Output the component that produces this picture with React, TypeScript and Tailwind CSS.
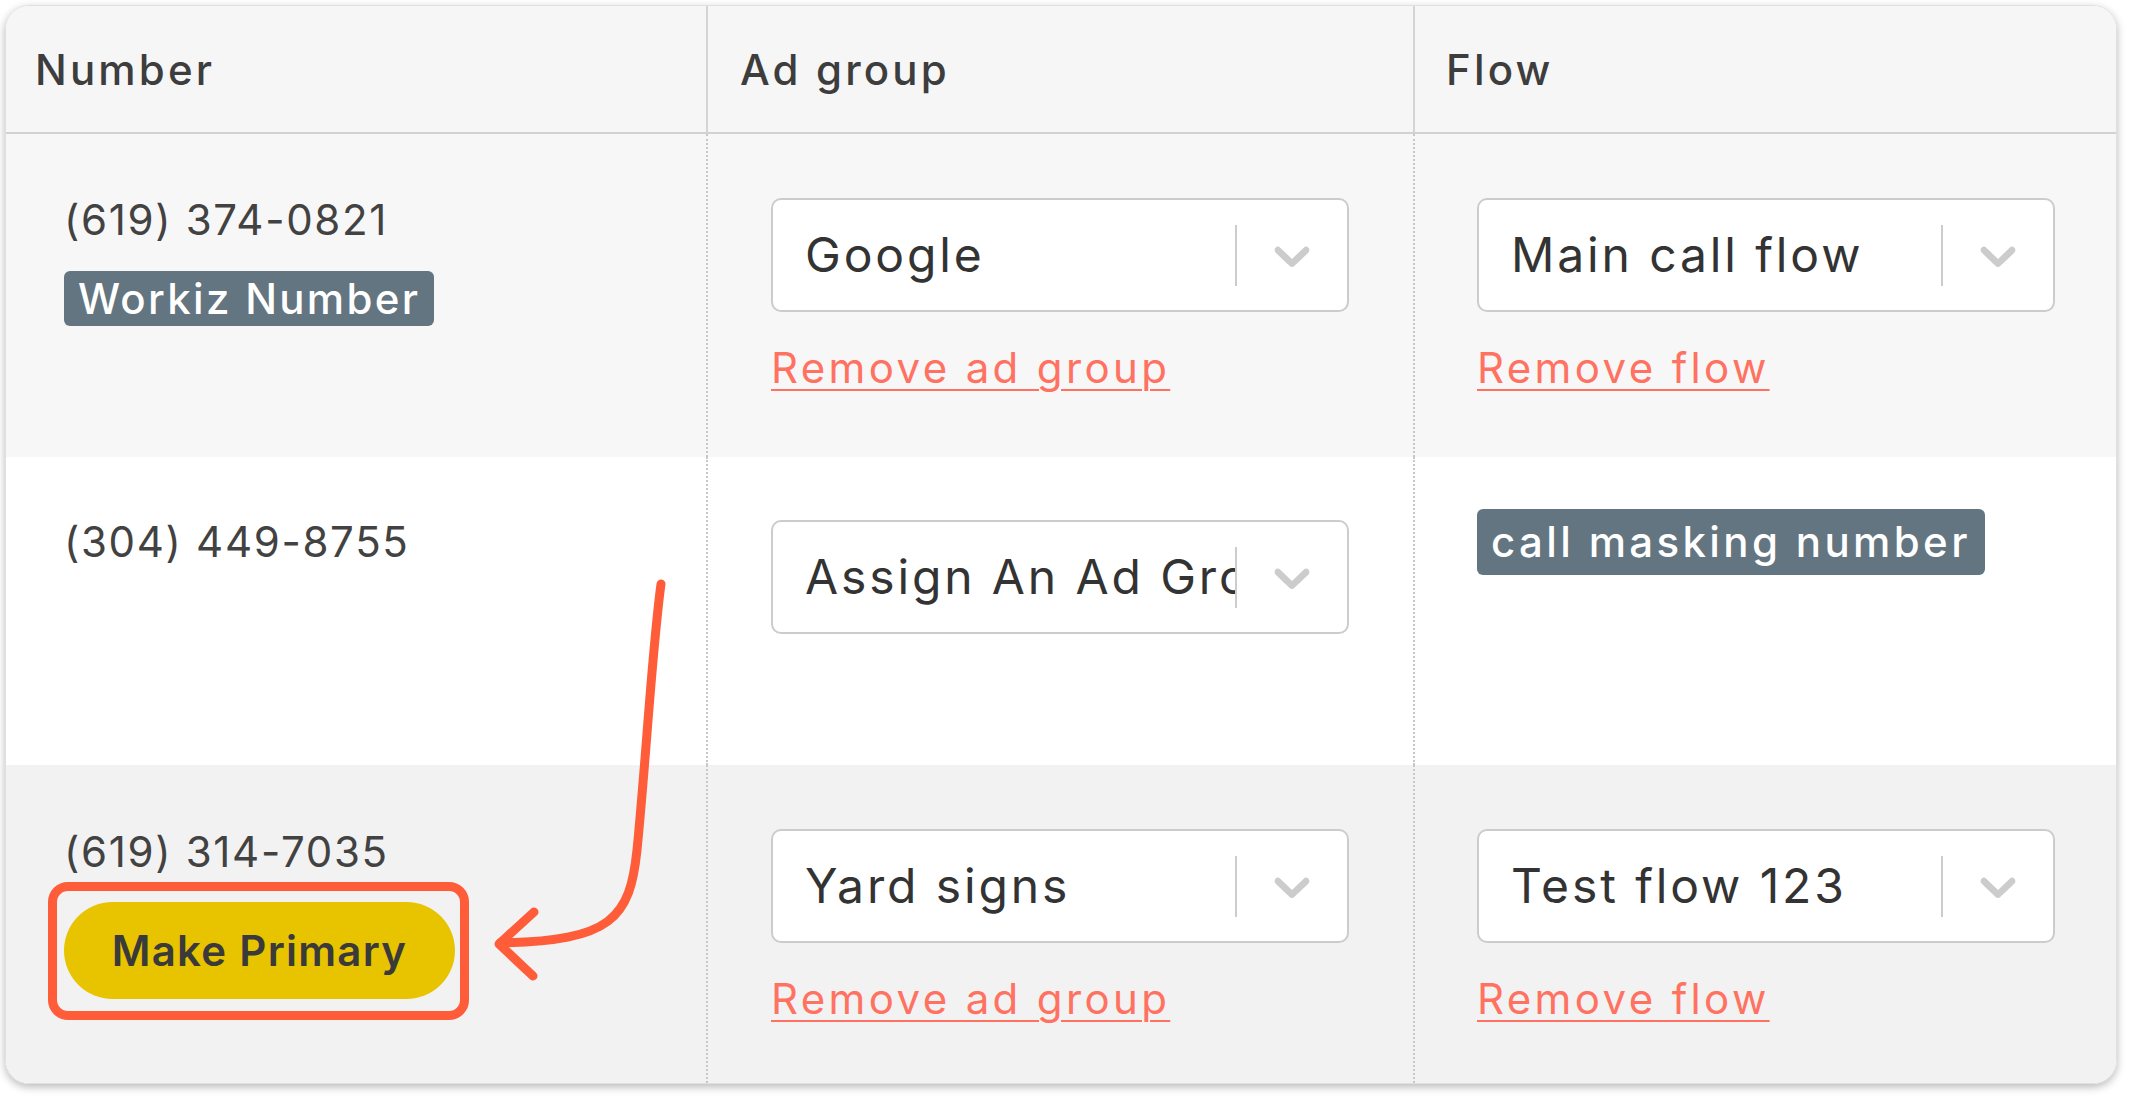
import React from "react"

function Chevron() {
  return (
    <svg viewBox="0 0 20 20" className="h-[60px] w-[60px] fill-[#cccccc]">
      <path d="M4.516 7.548c0.436-0.446 1.043-0.481 1.576 0L10 11.295l3.908-3.747c0.533-0.481 1.141-0.446 1.574 0 0.436 0.445 0.408 1.197 0 1.615-0.406 0.418-4.695 4.502-4.695 4.502C10.57 13.888 10.285 14 10 14s-0.57-0.112-0.789-0.335c0 0-4.287-4.084-4.695-4.502s-0.436-1.17 0-1.615z" />
    </svg>
  )
}

function Select({ value }: { value: string }) {
  return (
    <div className="flex h-[114px] w-[578px] items-center rounded-[10px] border-2 border-[#cccccc] bg-white">
      <div className="min-w-0 flex-1 overflow-hidden whitespace-nowrap pl-[32px] text-[48px] leading-[58px] tracking-[0.06em] text-[#333333]">
        {value}
      </div>
      <span className="h-[61px] w-[2px] shrink-0 bg-[#cccccc]" />
      <div className="flex w-[110px] shrink-0 items-center justify-center">
        <Chevron />
      </div>
    </div>
  )
}

function RemoveLink({ label }: { label: string }) {
  return (
    <a className="mt-[31px] block w-fit text-[42px] leading-[50px] tracking-[0.08em] text-[#ff7262] underline decoration-2 underline-offset-[6px]">
      {label}
    </a>
  )
}

function Badge({ label, tall }: { label: string; tall?: boolean }) {
  return (
    <span
      className={
        tall
          ? "inline-block h-[66px] rounded-[6px] bg-[#637580] px-[14px] text-[42px] font-medium leading-[66px] tracking-[0.08em] text-white"
          : "inline-block h-[55px] rounded-[6px] bg-[#637580] px-[14px] text-[42px] font-medium leading-[55px] tracking-[0.055em] text-white"
      }
    >
      {label}
    </span>
  )
}

function Phone({ value }: { value: string }) {
  return <div className="text-[42px] leading-[50px] tracking-[0.04em] text-[#424242]">{value}</div>
}

export default function App() {
  return (
    <div className="relative h-[1098px] w-[2130px] bg-white pl-[5px] pt-[5px] font-['Inter',sans-serif]">
      <div className="w-[2112px] overflow-hidden rounded-[24px] border border-[#e0e0e0] shadow-[0_3px_8px_rgba(0,0,0,0.28)]">
        {/* header */}
        <div className="grid h-[128px] grid-cols-[700px_707px_703px] border-b-2 border-[#d2d2d2] bg-[#f6f6f6] text-[42px] font-medium tracking-[0.075em] text-[#3d3d3d]">
          <div className="flex items-center pl-[29px]">Number</div>
          <div className="flex items-center border-l-2 border-[#d4d4d4] pl-[32px]">Ad group</div>
          <div className="flex items-center border-l-2 border-[#d4d4d4] pl-[31px]">Flow</div>
        </div>

        {/* row 1 */}
        <div className="grid h-[323px] grid-cols-[700px_707px_703px] bg-[#f7f7f7]">
          <div className="pl-[58px] pt-[61px]">
            <Phone value="(619) 374-0821" />
            <div className="mt-[26px]">
              <Badge label="Workiz Number" />
            </div>
          </div>
          <div className="border-l-2 border-dotted border-[#c8c8c8] pl-[63px] pt-[64px]">
            <Select value="Google" />
            <RemoveLink label="Remove ad group" />
          </div>
          <div className="border-l-2 border-dotted border-[#c8c8c8] pl-[62px] pt-[64px]">
            <Select value="Main call flow" />
            <RemoveLink label="Remove flow" />
          </div>
        </div>

        {/* row 2 */}
        <div className="grid h-[308px] grid-cols-[700px_707px_703px] bg-white">
          <div className="pl-[58px] pt-[60px]">
            <Phone value="(304) 449-8755" />
          </div>
          <div className="border-l-2 border-dotted border-[#c8c8c8] pl-[63px] pt-[63px]">
            <Select value="Assign An Ad Group" />
          </div>
          <div className="border-l-2 border-dotted border-[#c8c8c8] pl-[62px] pt-[52px]">
            <Badge label="call masking number" tall />
          </div>
        </div>

        {/* row 3 */}
        <div className="grid h-[318px] grid-cols-[700px_707px_703px] bg-[#f2f2f2]">
          <div className="pl-[58px] pt-[62px]">
            <Phone value="(619) 314-7035" />
            <div className="-ml-[16px] mt-[5px] inline-flex rounded-[20px] border-[9px] border-[#ff5c3a] pb-[12px] pl-[7px] pr-[5px] pt-[11px]">
              <button className="h-[97px] w-[391px] rounded-full bg-[#e8c300] text-[42px] font-semibold tracking-[0.03em] text-[#3a3a3a]">
                Make Primary
              </button>
            </div>
          </div>
          <div className="border-l-2 border-dotted border-[#c8c8c8] pl-[63px] pt-[64px]">
            <Select value="Yard signs" />
            <RemoveLink label="Remove ad group" />
          </div>
          <div className="border-l-2 border-dotted border-[#c8c8c8] pl-[62px] pt-[64px]">
            <Select value="Test flow 123" />
            <RemoveLink label="Remove flow" />
          </div>
        </div>
      </div>

      {/* annotation arrow */}
      <svg
        className="pointer-events-none absolute left-0 top-0"
        width="2130"
        height="1098"
        viewBox="0 0 2130 1098"
        fill="none"
        stroke="#ff5c3a"
        strokeWidth="9"
        strokeLinecap="round"
        strokeLinejoin="round"
      >
        <path d="M661 584 C652 650 646 760 637 850 C630 918 612 941 500 943" />
        <path d="M534 912 L499 944 L533 976" />
      </svg>
    </div>
  )
}
